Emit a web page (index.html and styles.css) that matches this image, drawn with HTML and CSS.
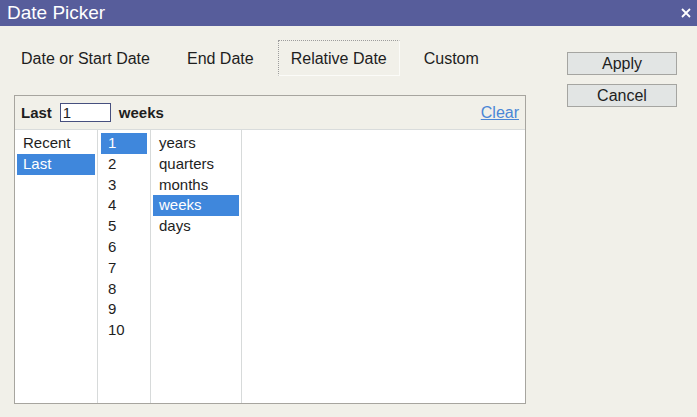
FILE: index.html
```html
<!DOCTYPE html>
<html>
<head>
<meta charset="utf-8">
<link rel="stylesheet" href="styles.css">
</head>
<body>
<div class="titlebar">
  <span class="title">Date Picker</span>
  <svg class="close" width="10" height="10" viewBox="0 0 10 10"><path d="M1 1L9 9M9 1L1 9" stroke="#fff" stroke-width="1.8"/></svg>
</div>
<div class="body">
  <div class="main">
    <div class="tabs">
      <div class="tab">Date or Start Date</div>
      <div class="tab">End Date</div>
      <div class="tab active">Relative Date</div>
      <div class="tab">Custom</div>
    </div>
    <div class="panel">
      <div class="panel-head">
        <span class="bold">Last</span>
        <input class="num" type="text" value="1">
        <span class="bold">weeks</span>
        <a class="clear" href="#">Clear</a>
      </div>
      <div class="cols">
        <ul class="col c1">
          <li class="item">Recent</li>
          <li class="item sel">Last</li>
        </ul>
        <ul class="col c2">
          <li class="item sel">1</li>
          <li class="item">2</li>
          <li class="item">3</li>
          <li class="item">4</li>
          <li class="item">5</li>
          <li class="item">6</li>
          <li class="item">7</li>
          <li class="item">8</li>
          <li class="item">9</li>
          <li class="item">10</li>
        </ul>
        <ul class="col c3">
          <li class="item">years</li>
          <li class="item">quarters</li>
          <li class="item">months</li>
          <li class="item sel">weeks</li>
          <li class="item">days</li>
        </ul>
        <div class="col c4"></div>
      </div>
    </div>
  </div>
  <div class="actions">
    <button class="btn">Apply</button>
    <button class="btn">Cancel</button>
  </div>
</div>
</body>
</html>
```
FILE: styles.css
```css
html, body {
  margin: 0;
  padding: 0;
}
body {
  width: 697px;
  height: 417px;
  overflow: hidden;
  background: #f1f0e9;
  font-family: "Liberation Sans", Arial, sans-serif;
  color: #1e1e1e;
}
.titlebar {
  height: 26px;
  background: #575d9b;
  display: flex;
  align-items: center;
  justify-content: space-between;
  padding: 0 6px 0 7px;
  color: #fff;
}
.title {
  font-size: 19px;
  line-height: 26px;
}
.close {
  display: block;
}
.body {
  display: flex;
  padding-top: 14px;
}
.main {
  width: 518px;
  padding-left: 8px;
}
.tabs {
  display: flex;
  gap: 11px;
  height: 36px;
}
.tab {
  padding: 1px 12px 0;
  border: 1px solid transparent;
  line-height: 33px;
  font-size: 16px;
  white-space: nowrap;
}
.tab.active {
  border-top: 1px dotted #9c9c9c;
  border-left: 1px dotted #9c9c9c;
  border-right: 1px solid #fbfbf8;
  border-bottom: 1px solid #fbfbf8;
}
.panel {
  margin-top: 19px;
  margin-left: 6px;
  width: 512px;
  box-sizing: border-box;
  border: 1px solid #a7a59f;
  background: #fff;
}
.panel-head {
  height: 34px;
  box-sizing: border-box;
  background: #f1f0e9;
  border-bottom: 1px solid #d9dcdc;
  display: flex;
  align-items: center;
  padding: 0 6px 0 6px;
  font-size: 15px;
}
.bold {
  font-weight: bold;
}
.num {
  width: 51px;
  height: 19px;
  box-sizing: border-box;
  border: 1px solid #47507f;
  margin: 0 8px;
  padding: 0 2px;
  font-family: "Liberation Sans", Arial, sans-serif;
  font-size: 15px;
  color: #1e1e1e;
  outline: none;
}
.clear {
  margin-left: auto;
  color: #4a86d6;
  font-size: 16px;
  text-decoration: underline;
}
.cols {
  display: flex;
  height: 273px;
}
.col {
  list-style: none;
  margin: 0;
  border-right: 1px solid #d7dada;
  font-size: 15px;
}
.c1 { width: 83px; box-sizing: border-box; padding: 3px 2px 2px; }
.c2 { width: 53px; box-sizing: border-box; padding: 3px 3px 2px; }
.c3 { width: 91px; box-sizing: border-box; padding: 3px 2px 2px; }
.c4 { flex: 1; border-right: none; }
.item {
  height: 20.8px;
  line-height: 20.8px;
  padding-left: 6px;
}
.c2 .item {
  padding-left: 7px;
}
.item.sel {
  background: #3f87dc;
  color: #fff;
}
.actions {
  margin-left: 41px;
  margin-top: 12px;
  display: flex;
  flex-direction: column;
  gap: 9px;
}
.btn {
  width: 110px;
  height: 23px;
  box-sizing: border-box;
  border: 1px solid #a5a5a1;
  background: #e2e5e4;
  font-family: "Liberation Sans", Arial, sans-serif;
  font-size: 16px;
  color: #1e1e1e;
  padding: 0;
  line-height: 21px;
}
```
